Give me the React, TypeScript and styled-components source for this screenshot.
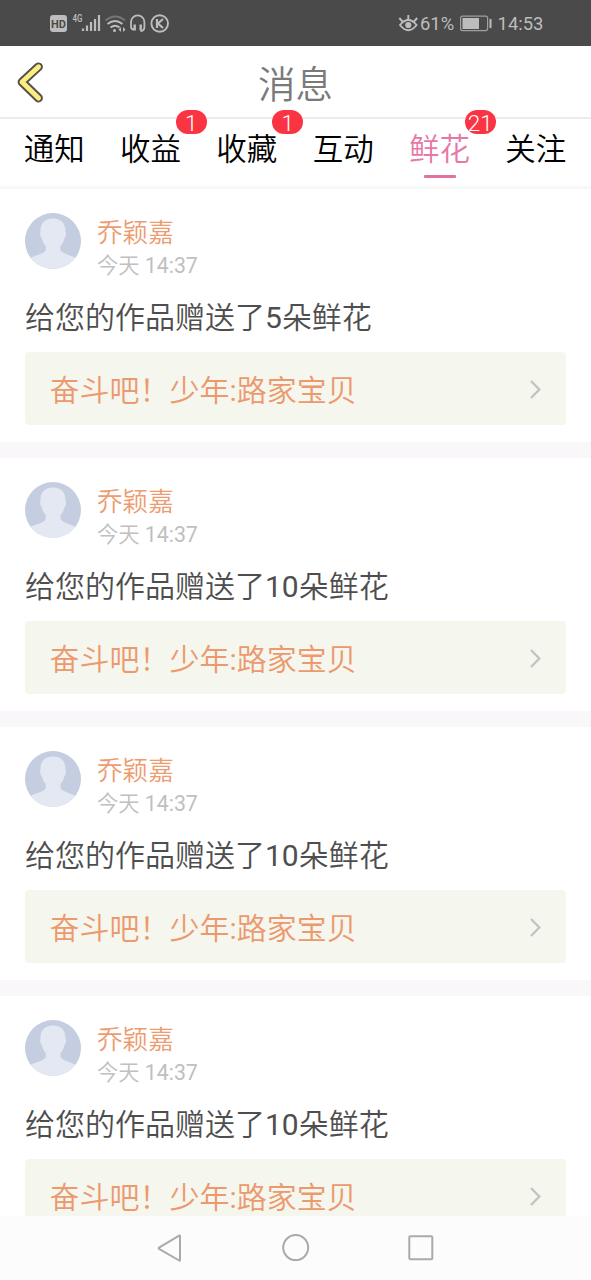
import React from 'react';
import styled, { createGlobalStyle } from 'styled-components';

const GlobalStyle = createGlobalStyle`
  * { box-sizing: border-box; }
  body {
    margin: 0;
    background: #fff;
    font-family: Roboto, 'Noto Sans CJK SC', sans-serif;
    font-weight: 350;
  }
`;

const Screen = styled.div`
  width: 591px;
  height: 1280px;
  display: flex;
  flex-direction: column;
  overflow: hidden;
  background: #fff;
`;

const StatusBar = styled.div`
  flex: none;
  height: 46px;
  background: #4a4a4a;
  display: flex;
  align-items: center;
  justify-content: space-between;
  padding: 0 48px 0 50px;
  color: #bdbdbd;
  font-size: 18.4px;
  font-weight: 400;
`;

const StatusGroup = styled.div`
  display: flex;
  align-items: center;
  height: 46px;
`;

const StatusText = styled.span<{ $width: number }>`
  width: ${(p) => p.$width}px;
  white-space: nowrap;
  line-height: 46px;
  padding-top: 1px;
`;

const Header = styled.header`
  flex: none;
  height: 73px;
  display: grid;
  grid-template-columns: 60px 1fr 60px;
  align-items: center;
  border-bottom: 2px solid #ececec;
`;

const BackButton = styled.button`
  width: 60px;
  height: 71px;
  padding: 0;
  border: 0;
  background: none;
  display: block;
`;

const Title = styled.h1`
  margin: 0;
  padding-top: 7px;
  text-align: center;
  font-size: 37.5px;
  line-height: 64px;
  font-weight: 350;
  color: #7a7a7a;
`;

const Tabs = styled.nav`
  flex: none;
  height: 70px;
  display: grid;
  grid-template-columns: repeat(6, 1fr);
  padding: 0 7px 0 6px;
  border-bottom: 3px solid #f9f8f9;
`;

const Tab = styled.div<{ $active?: boolean }>`
  position: relative;
  display: flex;
  flex-direction: column;
  align-items: center;
  font-size: 30.5px;
  line-height: 53px;
  padding-top: 4px;
  color: ${(p) => (p.$active ? '#e777a6' : '#000')};
`;

const Underline = styled.span`
  width: 32px;
  height: 3px;
  margin: -1px 0 0 1px;
  border-radius: 1px;
  background: #e2719f;
`;

const Badge = styled.span`
  position: absolute;
  top: -9px;
  left: 73.5px;
  width: 31px;
  height: 24px;
  border-radius: 12px;
  background: #fb3443;
  color: #fff;
  font-size: 22.5px;
  line-height: 26px;
  text-align: center;
`;

const Feed = styled.main`
  flex: 1;
  min-height: 0;
  overflow: hidden;
`;

const Item = styled.article`
  height: 269px;
  padding: 24px 25px 0;
  border-bottom: 16px solid #f9f7f9;
`;

const Sender = styled.div`
  display: flex;
  gap: 16px;
  height: 66px;
`;

const SenderText = styled.div`
  display: flex;
  flex-direction: column;
`;

const Name = styled.div`
  font-size: 25.6px;
  line-height: 40px;
  height: 38px;
  color: #ed9b70;
`;

const Time = styled.div`
  font-size: 21.3px;
  line-height: 29px;
  color: #c0c0c0;
`;

const Digits = styled.span`
  font-weight: 400;
`;

const Message = styled.p`
  margin: 0;
  height: 73px;
  font-size: 30px;
  line-height: 77px;
  color: #4e4e4e;
  white-space: nowrap;
`;

const WorkLink = styled.div`
  height: 73px;
  border-radius: 4px;
  background: #f5f6ed;
  display: flex;
  align-items: center;
  justify-content: space-between;
  padding: 0 24px 0 24.5px;
  color: #ec996d;
`;

const WorkTitle = styled.span`
  padding-top: 4px;
  font-size: 30px;
  line-height: 69px;
  white-space: nowrap;
`;

const NavBar = styled.footer`
  flex: none;
  height: 64px;
  background: #fcfcfc;
  display: flex;
  justify-content: center;
  align-items: center;
  gap: 98px;
`;

const LeftStatusIcons = () => (
  <svg width="122" height="24" viewBox="50 11 122 24" fill="none" stroke="#bdbdbd">
    <rect x="50" y="15" width="17" height="17" rx="3" fill="#bdbdbd" stroke="none" />
    <text x="58.5" y="27.6" fontSize="11" fontWeight="700" textAnchor="middle" fill="#4a4a4a" stroke="none">HD</text>
    <text x="72.5" y="22.300" fontSize="10.500" fontWeight="500" textLength="10" lengthAdjust="spacingAndGlyphs" fill="#bdbdbd" stroke="none">4G</text>
    <path d="M83 31v-2.500M87 31v-5.500M91 31v-9M95 31v-12M99 31V15" strokeWidth="2.200" />
    <path d="M105.500 20.500q10-8 19.500 0" strokeWidth="2" stroke="#777" />
    <path d="M107.500 24q7.500-6 15 0M110.500 27.500q4.500-3.500 9 0" strokeWidth="2" />
    <circle cx="114.500" cy="30.500" r="1.500" fill="#bdbdbd" stroke="none" />
    <path d="M121 27v5l-2.500-2.500zM123 27v5l2.500-2.500z" fill="#bdbdbd" stroke="none" />
    <path d="M134 29.500q-3 0-3-3V22a6.700 6.700 0 0 1 13.400 0v5q0 3.500-3.900 4.500" strokeWidth="1.800" />
    <path d="M134.700 24.500v6M140.700 24.500v6" strokeWidth="2.400" />
    <circle cx="159.700" cy="23.500" r="8.300" strokeWidth="1.900" />
    <path d="M157 19v9M163 19l-5 4.500 5 4.500" strokeWidth="2.200" />
  </svg>
);

const EyeIcon = () => (
  <svg width="22" height="24" viewBox="398 11 22 24" fill="none" stroke="#bdbdbd" strokeWidth="1.900">
    <path d="M400 25q8.300-10 16.600 0-8.300 10.500-16.600 0z" />
    <path d="M408.300 20v-5M402.500 21.500l-3.200-3.500M414 21.500l3.200-3.500" />
    <circle cx="408.300" cy="25" r="3.100" fill="#bdbdbd" stroke="none" />
  </svg>
);

const BatteryIcon = () => (
  <svg width="33" height="18" viewBox="460 14.500 33 18">
    <rect x="460.600" y="16.600" width="27" height="14.500" rx="2" fill="none" stroke="#a0a0a0" strokeWidth="1.200" />
    <rect x="462.500" y="18.500" width="16.500" height="11" fill="#bdbdbd" />
    <rect x="489.500" y="19.200" width="2" height="9.500" rx="1" fill="#bdbdbd" />
  </svg>
);

const BackIcon = () => (
  <svg width="60" height="71" viewBox="0 0 60 71" fill="none" strokeLinecap="round" strokeLinejoin="round">
    <path d="M38.500 20.800L22 36l16.500 16" stroke="#545049" strokeWidth="8.800" />
    <path d="M38.500 20.800L22 36l16.500 16" stroke="#fbee80" strokeWidth="5" />
  </svg>
);

const Avatar = () => (
  <svg width="56" height="56" viewBox="0 0 56 56">
    <defs>
      <clipPath id="avatar-clip"><circle cx="28" cy="28" r="28" /></clipPath>
    </defs>
    <g clipPath="url(#avatar-clip)">
      <rect width="56" height="56" fill="#c5cde0" />
      <path d="M28 5.500c-9 0-13 6-12.500 13.500-.8 1-.4 4.500 1.300 6 .7 3.500 2 6 4 8v4c-1 4-11 5-17.800 9V58h50V46c-6.500-4-16-5-17.500-9v-4c2-2 3.400-4.500 4-8 1.700-1.500 2-5 1-6 .5-7.500-3.500-13.500-12.500-13.500z" fill="#e3e8f2" />
    </g>
  </svg>
);

const Chevron = () => (
  <svg width="14" height="22" viewBox="0 0 14 22" fill="none" stroke="#c3c4be" strokeWidth="2.400">
    <path d="M3 3L11.300 11.500 3 20" />
  </svg>
);

const TriangleIcon = () => (
  <svg width="28" height="30" viewBox="0 0 28 30" fill="none" stroke="#aaa" strokeWidth="2" strokeLinejoin="round">
    <path d="M24 3v24.500q0 .5-.8 0L3 15.800q-.8-.6 0-1.200L23.200 2.600q.8-.4.800.400z" />
  </svg>
);

const CircleIcon = () => (
  <svg width="28" height="30" viewBox="0 0 28 30" fill="none" stroke="#aaa" strokeWidth="2">
    <circle cx="13.700" cy="14.600" r="12.500" />
  </svg>
);

const SquareIcon = () => (
  <svg width="28" height="30" viewBox="0 0 28 30" fill="none" stroke="#aaa" strokeWidth="2">
    <rect x="1.300" y="3.300" width="23" height="23" rx="1" />
  </svg>
);

const tabs: { label: string; badge?: number; active?: boolean }[] = [
  { label: '通知' },
  { label: '收益', badge: 1 },
  { label: '收藏', badge: 1 },
  { label: '互动' },
  { label: '鲜花', badge: 21, active: true },
  { label: '关注' },
];

const flowers = [5, 10, 10, 10];

export default function App() {
  return (
    <>
      <GlobalStyle />
      <Screen>
        <StatusBar>
          <StatusGroup><LeftStatusIcons /></StatusGroup>
          <StatusGroup>
            <EyeIcon />
            <StatusText $width={40}>61%</StatusText>
            <BatteryIcon />
            <StatusText $width={50}>&nbsp;14:53</StatusText>
          </StatusGroup>
        </StatusBar>
        <Header>
          <BackButton aria-label="返回"><BackIcon /></BackButton>
          <Title>消息</Title>
        </Header>
        <Tabs>
          {tabs.map((tab) => (
            <Tab key={tab.label} $active={tab.active}>
              {tab.label}
              {tab.active && <Underline />}
              {tab.badge && <Badge>{tab.badge}</Badge>}
            </Tab>
          ))}
        </Tabs>
        <Feed>
          {flowers.map((count, i) => (
            <Item key={i}>
              <Sender>
                <Avatar />
                <SenderText>
                  <Name>乔颖嘉</Name>
                  <Time>今天 <Digits>14:37</Digits></Time>
                </SenderText>
              </Sender>
              <Message>给您的作品赠送了<Digits>{count}</Digits>朵鲜花</Message>
              <WorkLink>
                <WorkTitle>奋斗吧！少年<Digits>:</Digits>路家宝贝</WorkTitle>
                <Chevron />
              </WorkLink>
            </Item>
          ))}
        </Feed>
        <NavBar>
          <TriangleIcon />
          <CircleIcon />
          <SquareIcon />
        </NavBar>
      </Screen>
    </>
  );
}
